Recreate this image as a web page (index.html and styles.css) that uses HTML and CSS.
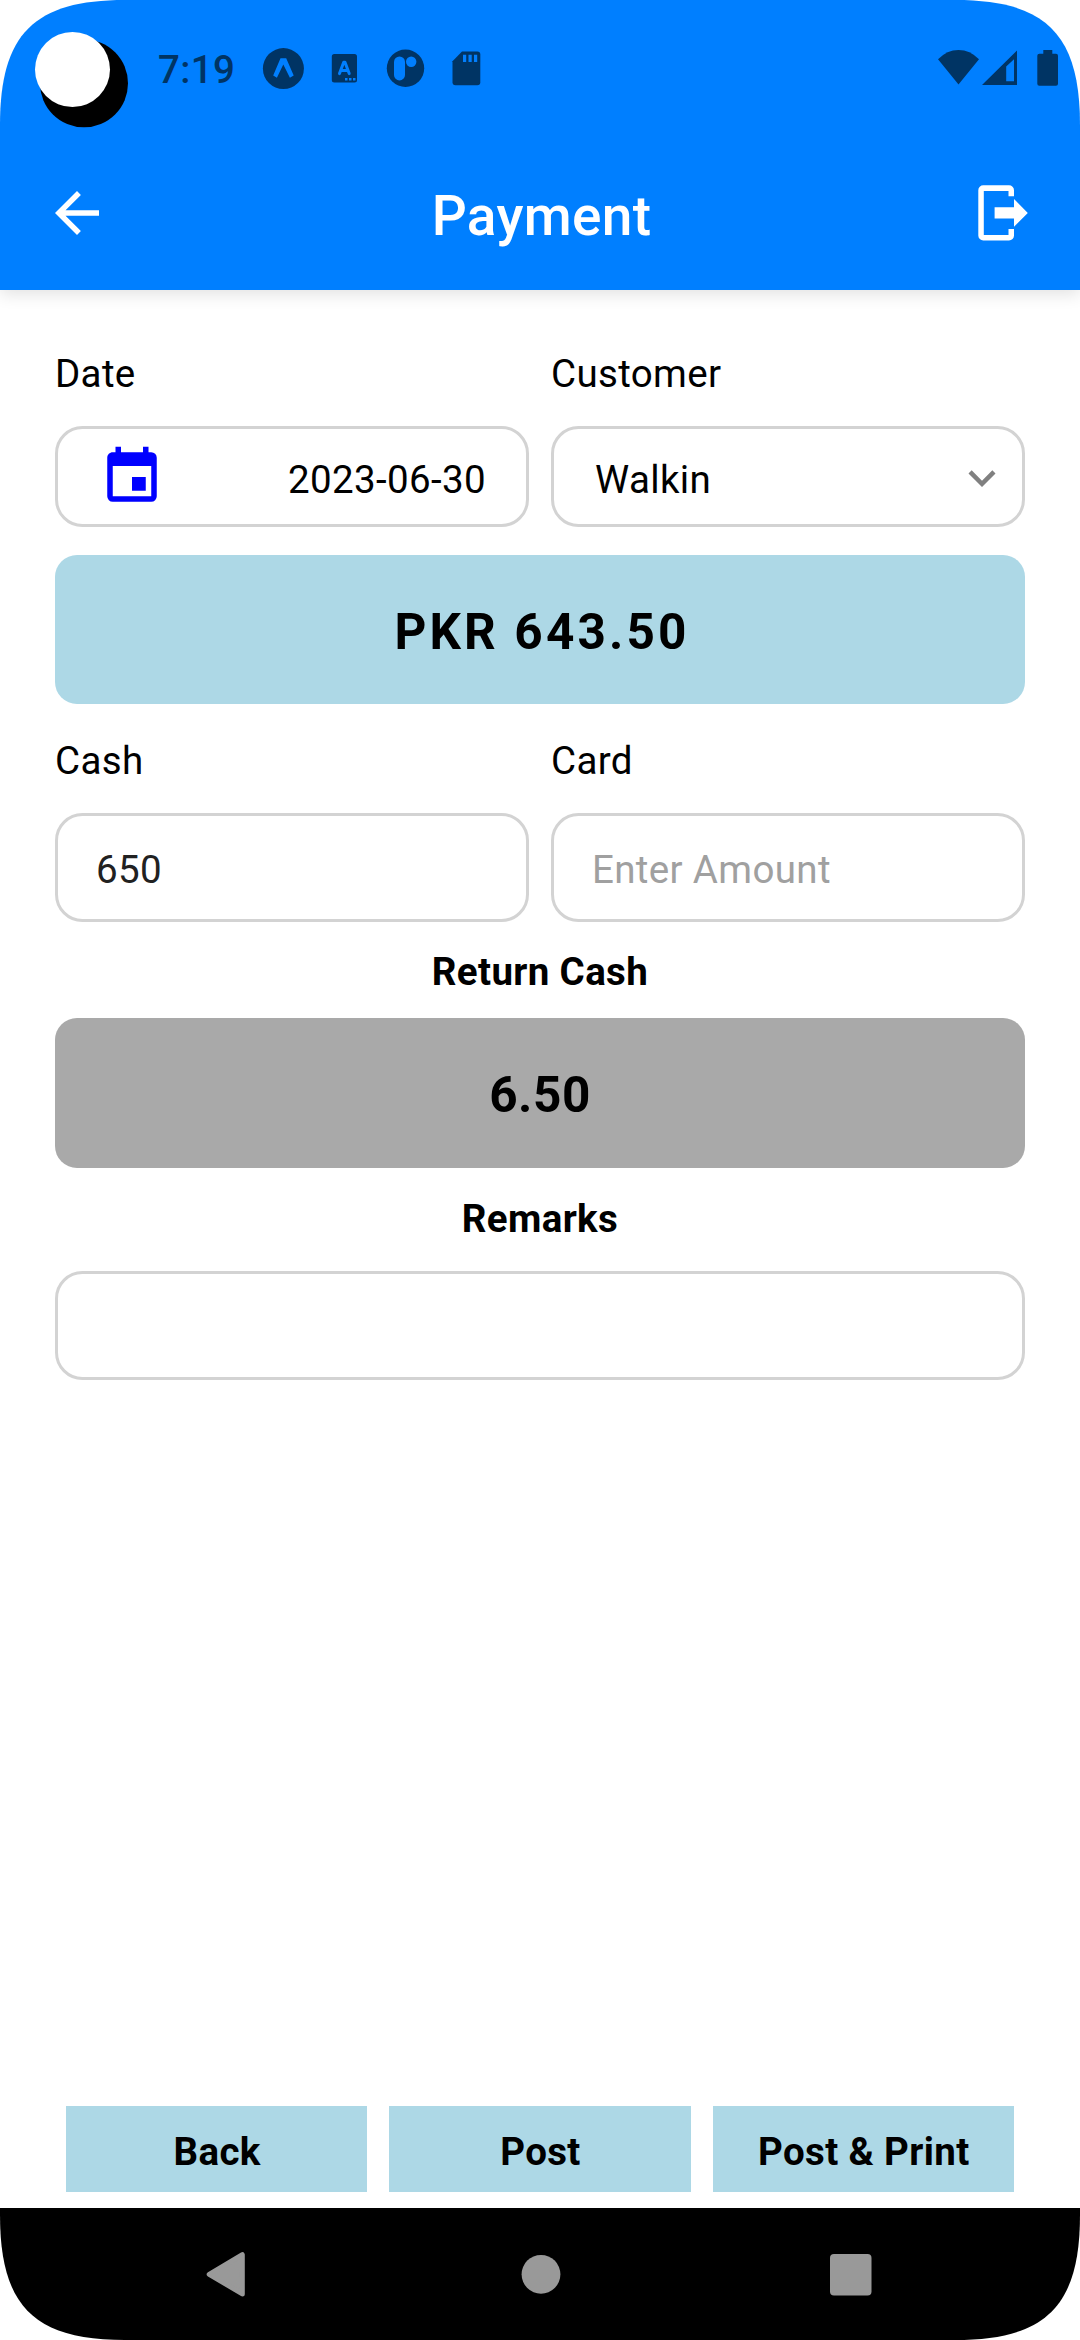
FILE: index.html
```html
<!DOCTYPE html>
<html lang="en">
<head>
<meta charset="utf-8">
<title>Payment</title>
<link rel="stylesheet" href="styles.css">
</head>
<body>
<div class="screen">
  <header class="top">
    <div class="status">
      <svg class="camera" viewBox="0 0 96 98"><circle cx="52" cy="53.3" r="44"/><circle cx="40.5" cy="39.5" r="37.5" fill="#fff"/></svg>
      <span class="clock">7:19</span>
      <svg class="notices" viewBox="0 0 230 44">
        <circle cx="23.4" cy="21.6" r="20.5"/>
        <path class="cut" d="M20.5 11.2h5.7L33.700 28.500 29.900 30.700 23.300 17.400 16.900 30.700 13.200 28.500z"/>
        <rect x="71.800" y="7" width="25.200" height="28.500" rx="2.500"/>
        <path class="cut-line" d="M79.500 26.600 83.700 15.200H85L89.200 26.600M81.500 23.400h5.700"/>
        <path class="cut" d="M85 31h2.500v2.500H85zM89 31h2.500v2.500H89zM93 31h2.500v2.500H93z"/>
        <circle cx="145.500" cy="21.300" r="18.700"/>
        <rect class="cut" x="134" y="9.400" width="11" height="24" rx="5.500"/>
        <circle class="cut" cx="151.200" cy="14.700" r="5.200"/>
        <path d="M202 4.500h15.300a3 3 0 0 1 3 3v27.800a3 3 0 0 1-3 3H195.500a3 3 0 0 1-3-3V14.200z"/>
        <path class="cut" d="M203 7.700h3.200v7.300H203zM208.500 7.700h3.200v7.300h-3.200zM214 7.700h3.200v7.300H214z"/>
      </svg>
      <svg class="signals" viewBox="0 0 124 40">
        <path d="M1 12.300Q10 3 21.500 3t20.500 9.300L21.500 37.500z"/>
        <path fill-rule="evenodd" d="M80 3.500V38H45zM77 12.300 69.200 19.500V34.200H77z"/>
        <path d="M106.300 3h9v3.800h3.700a2 2 0 0 1 2 2v28a2 2 0 0 1-2 2h-16.700a2 2 0 0 1-2-2v-28a2 2 0 0 1 2-2h4z"/>
      </svg>
    </div>
    <div class="appbar">
      <svg class="icon-back" viewBox="0 0 24 24"><path d="M20 11H7.830l5.590-5.590L12 4l-8 8 8 8 1.410-1.410L7.830 13H20z"/></svg>
      <h1 class="title">Payment</h1>
      <svg class="icon-exit" viewBox="0 0 50 56"><path d="M30.500 11.300V6H5.800V50H30.500V44H36V50.500a5 5 0 0 1-5 5H5.300a5 5 0 0 1-5-5V5.300a5 5 0 0 1 5-5H31a5 5 0 0 1 5 5v6z"/><path d="M16.600 22.300H36V14L49.800 28 36 41.800V33.500H16.600z"/></svg>
    </div>
  </header>

  <main class="form">
    <div class="row">
      <span class="label">Date</span>
      <span class="label">Customer</span>
      <div class="field field-date">
        <svg class="icon-calendar" viewBox="0 0 24 24"><path d="M19 19H5V8h14m-3-7v2H8V1H6v2H5c-1.110 0-2 .89-2 2v14a2 2 0 0 0 2 2h14a2 2 0 0 0 2-2V5a2 2 0 0 0-2-2h-1V1m-1 11h-5v5h5z"/></svg>
        <span>2023-06-30</span>
      </div>
      <div class="field field-select">
        <span>Walkin</span>
        <svg class="icon-chevron" viewBox="0 0 24 24"><path d="M16.590 8.590 12 13.170 7.410 8.590 6 10l6 6 6-6z"/></svg>
      </div>
    </div>

    <div class="amount total">PKR 643.50</div>

    <div class="row row-inputs">
      <span class="label">Cash</span>
      <span class="label">Card</span>
      <div class="field field-input">650</div>
      <div class="field field-input empty">Enter Amount</div>
    </div>

    <div class="heading heading-return">Return Cash</div>
    <div class="amount change">6.50</div>
    <div class="heading heading-remarks">Remarks</div>
    <div class="field field-input"></div>
  </main>

  <div class="actions">
    <div class="action">Back</div>
    <div class="action">Post</div>
    <div class="action">Post &amp; Print</div>
  </div>

  <nav class="navbar">
    <svg class="nav-icon" viewBox="0 0 60 60"><path d="M12.200 30.300 45.300 10.700V49.900z" stroke="#999" stroke-width="5" stroke-linejoin="round"/></svg>
    <svg class="nav-icon" viewBox="0 0 60 60"><circle cx="32" cy="30.300" r="19.400"/></svg>
    <svg class="nav-icon" viewBox="0 0 60 60"><rect x="10" y="10" width="41.500" height="41.500" rx="4"/></svg>
  </nav>
</div>
</body>
</html>
```
FILE: styles.css
```css
* { box-sizing: border-box; }

body {
  margin: 0;
  background: #fff;
  color: #000;
  font: 400 38.5px/52px Roboto, sans-serif;
  letter-spacing: .35px;
}

svg { display: block; flex: none; }

.screen {
  display: flex;
  flex-direction: column;
  width: 1080px;
  height: 2340px;
  overflow: hidden;
  background: #fff;
  clip-path: path("M0 125C0 34 34 0 125 0H955C1046 0 1080 34 1080 125V2215C1080 2306 1046 2340 955 2340H125C34 2340 0 2306 0 2215Z");
}

/* Status bar and title bar */
.top {
  flex: none;
  height: 290px;
  background: #007fff;
  box-shadow: 0 4px 16px rgba(0, 0, 0, .12);
}

.status {
  display: flex;
  align-items: flex-start;
  height: 136px;
  padding: 30px 19px 0 32px;
  fill: #003464;
}

.camera { width: 96px; height: 98px; fill: #000; }
.clock {
  width: 102px;
  margin: 14px 0 0 30px;
  color: #003464;
  font-weight: 500;
}
.notices { width: 230px; height: 44px; margin-top: 17px; }
.cut { fill: #007fff; }
.cut-line { fill: none; stroke: #007fff; stroke-width: 3; stroke-linecap: round; stroke-linejoin: round; }
.signals { width: 124px; height: 40px; margin: 17px 0 0 auto; }

.appbar {
  display: flex;
  align-items: center;
  justify-content: space-between;
  height: 154px;
  padding: 0 52px 0 44px;
  fill: #fff;
}
.icon-back { width: 66px; height: 66px; }
.title {
  margin: 6px 0 0;
  padding-right: 5px;
  color: #fff;
  font-size: 55px;
  font-weight: 500;
  line-height: 66px;
}
.icon-exit { width: 50px; height: 56px; }

/* Payment form */
.form {
  display: flex;
  flex-direction: column;
  flex: 1;
  padding: 58px 55px 0;
}

.row {
  display: grid;
  grid-template-columns: 1fr 1fr;
  column-gap: 22px;
  row-gap: 26px;
}
.row-inputs { margin-top: 31px; }

.field {
  display: flex;
  align-items: center;
  border: 3px solid #d3d3d3;
  border-radius: 27.5px;
}
.field-date {
  justify-content: space-between;
  height: 101px;
  padding: 6px 40px 0 41px;
}
.icon-calendar { width: 66px; height: 66px; margin-top: -5px; fill: #00f; }
.field-select {
  justify-content: space-between;
  height: 101px;
  padding: 6px 13px 0 41px;
}
.icon-chevron { width: 54px; height: 54px; margin-top: -4px; fill: #808080; }
.field-input {
  height: 109px;
  padding: 5px 38px 0;
  color: #212121;
}
.field-input.empty { color: #a0a0a0; }

.amount {
  display: flex;
  align-items: center;
  justify-content: center;
  border-radius: 22px;
  font-size: 49.5px;
  font-weight: 700;
  letter-spacing: .5px;
}
.total {
  height: 149px;
  margin-top: 28px;
  padding: 5px 0 0 4px;
  background: #add8e6;
  letter-spacing: 3.15px;
}
.change {
  height: 150px;
  padding-top: 4px;
  background: #a9a9a9;
}

.heading { font-weight: 700; text-align: center; }
.heading-return { margin: 24px 0 20px; }
.heading-remarks { margin: 25px 0 26px; }

/* Bottom buttons */
.actions {
  display: grid;
  grid-template-columns: repeat(3, 1fr);
  gap: 22px;
  padding: 0 66px 16px;
}
.action {
  height: 86px;
  padding: 20px 0 0 1px;
  background: #add8e6;
  font-weight: 700;
  text-align: center;
}

/* System navigation */
.navbar {
  display: flex;
  flex: none;
  align-items: center;
  justify-content: space-between;
  height: 132px;
  padding: 0 200px 0 197px;
  background: #000;
  fill: #999;
}
.nav-icon { width: 60px; height: 60px; }
```
